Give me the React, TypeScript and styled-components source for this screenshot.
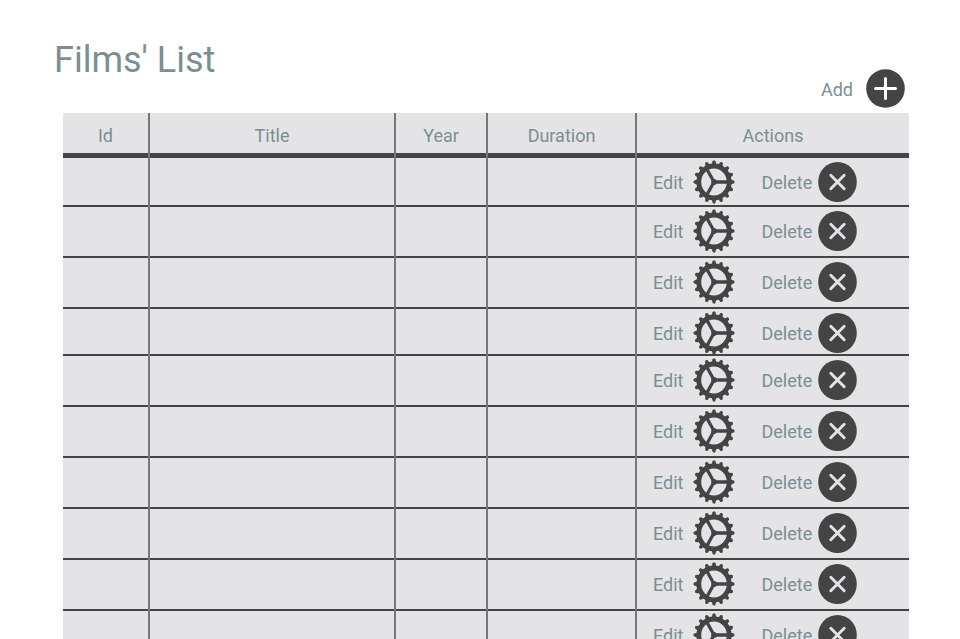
import React from "react";
import styled, { createGlobalStyle } from "styled-components";

const GlobalStyle = createGlobalStyle`
  * { box-sizing: border-box; }
  body {
    margin: 0;
    background: #ffffff;
    color: #7b8e94;
    font-family: Roboto, sans-serif;
    font-size: 18px;
    line-height: 24px;
  }
`;

const Page = styled.main`
  padding: 36px 51px 0 63px;
`;

const PageTitle = styled.h1`
  margin: 0 0 0 -12px;
  padding-left: 3px;
  font-size: 36px;
  line-height: 48px;
  font-weight: 400;
`;

const Toolbar = styled.div`
  display: flex;
  justify-content: flex-end;
  margin-top: -15px;
  padding: 0 4px 5px 0;
`;

const ActionButton = styled.button<{ $gap: number }>`
  display: inline-flex;
  align-items: center;
  gap: ${(p) => p.$gap}px;
  padding: 0;
  border: 0;
  background: none;
  color: inherit;
  font: inherit;
  cursor: pointer;

  svg {
    display: block;
    flex: none;
    color: #444444;
  }
`;

const Label = styled.span`
  padding-top: 2px;
`;

const Table = styled.table`
  width: 100%;
  table-layout: fixed;
  border-collapse: separate;
  border-spacing: 0;
  background: #e4e4e6;
`;

const Column = styled.col<{ $width?: number }>`
  width: ${(p) => (p.$width ? `${p.$width}px` : "auto")};
`;

const HeaderCell = styled.th`
  height: 45px;
  padding: 5px 0;
  border-right: 2px solid #77777a;
  box-shadow: inset 0 -5px #444346;
  font-weight: 400;
  text-align: center;
  vertical-align: middle;

  &:last-child { border-right: 0; }
`;

const Row = styled.tr<{ $height: number }>`
  height: ${(p) => p.$height}px;
`;

const Cell = styled.td`
  padding: 0;
  border-right: 2px solid #77777a;
  box-shadow: inset 0 -2px #444346;
  vertical-align: top;

  &:last-child { border-right: 0; }
`;

const Actions = styled.div`
  display: flex;
  align-items: center;
  gap: 26px;
  height: 45px;
  padding: 3px 0 0 16px;
`;

const TEETH = 16;

function GearIcon() {
  return (
    <svg width="42" height="44" viewBox="-21 -22 42 44" aria-hidden="true">
      <g transform="scale(1 1.05)" fill="none" stroke="currentColor">
        <circle r="15.2" strokeWidth="4.8" />
        {Array.from({ length: TEETH }, (_, i) => (
          <path
            key={i}
            d="M16.5 -2.4L19.8 -1.4Q21.4 0 19.8 1.4L16.5 2.4Z"
            fill="currentColor"
            stroke="none"
            transform={`rotate(${(i * 360) / TEETH - 90})`}
          />
        ))}
        <path d="M0 0H14M0 0L-7 -12.1M0 0L-7 12.1" strokeWidth="3.2" />
        <circle r="2.8" fill="currentColor" stroke="none" />
      </g>
    </svg>
  );
}

function DeleteIcon() {
  return (
    <svg width="39" height="40" viewBox="0 0 39 40" aria-hidden="true">
      <ellipse cx="19.5" cy="20" rx="19.3" ry="20" fill="currentColor" />
      <path d="M12.8 13.2L26.2 26.8M26.2 13.2L12.8 26.8" stroke="#e4e4e6" strokeWidth="2.9" strokeLinecap="round" />
    </svg>
  );
}

function AddIcon() {
  return (
    <svg width="39" height="39" viewBox="0 0 39 39" aria-hidden="true">
      <circle cx="19.5" cy="19.5" r="19.3" fill="currentColor" />
      <path d="M19.5 9.5V29.5M9.5 19.5H29.5" stroke="#ffffff" strokeWidth="3" strokeLinecap="round" />
    </svg>
  );
}

const columns = [
  { name: "Id", width: 87 },
  { name: "Title" },
  { name: "Year", width: 92 },
  { name: "Duration", width: 149 },
  { name: "Actions", width: 272 },
];

const rowHeights = [49, 51, 51, 47, 51, 51, 51, 51, 51, 51];

export default function App() {
  return (
    <>
      <GlobalStyle />
      <Page>
        <PageTitle>Films' List</PageTitle>
        <Toolbar>
          <ActionButton type="button" $gap={13}>
            <Label>Add</Label>
            <AddIcon />
          </ActionButton>
        </Toolbar>
        <Table>
          <colgroup>
            {columns.map((c) => (
              <Column key={c.name} $width={c.width} />
            ))}
          </colgroup>
          <thead>
            <tr>
              {columns.map((c) => (
                <HeaderCell key={c.name} scope="col">{c.name}</HeaderCell>
              ))}
            </tr>
          </thead>
          <tbody>
            {rowHeights.map((height, i) => (
              <Row key={i} $height={height}>
                <Cell />
                <Cell />
                <Cell />
                <Cell />
                <Cell>
                  <Actions>
                    <ActionButton type="button" $gap={10}>
                      <Label>Edit</Label>
                      <GearIcon />
                    </ActionButton>
                    <ActionButton type="button" $gap={6}>
                      <Label>Delete</Label>
                      <DeleteIcon />
                    </ActionButton>
                  </Actions>
                </Cell>
              </Row>
            ))}
          </tbody>
        </Table>
      </Page>
    </>
  );
}
